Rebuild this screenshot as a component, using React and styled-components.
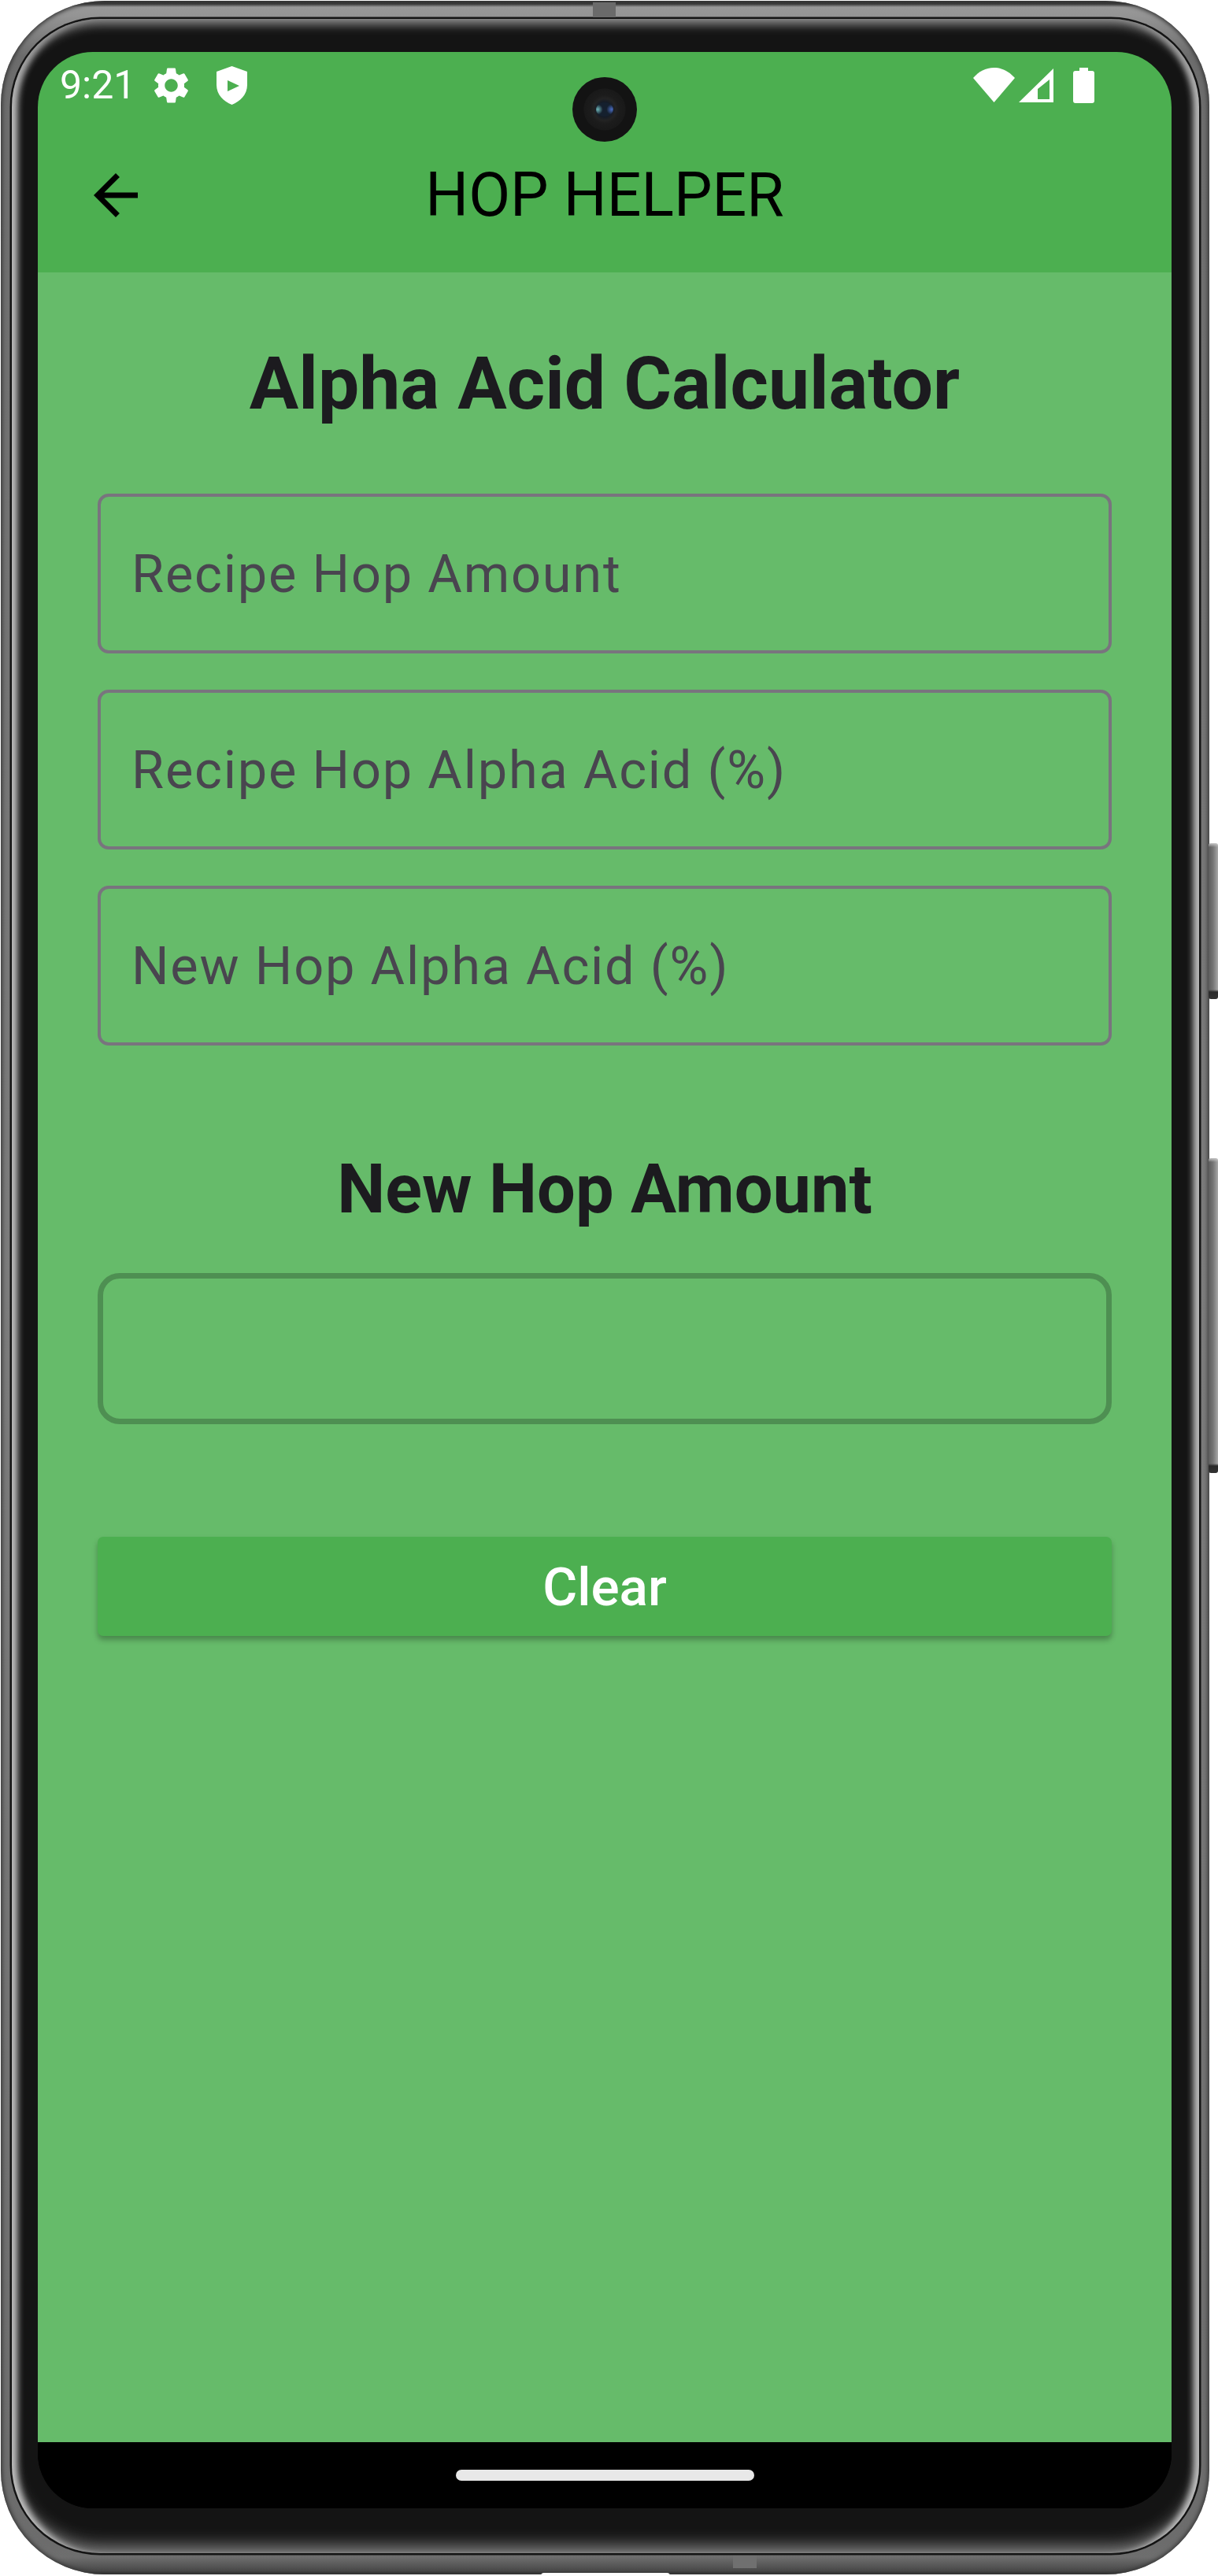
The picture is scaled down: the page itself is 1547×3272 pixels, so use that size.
import React from 'react';
import styled, { createGlobalStyle } from 'styled-components';

const GlobalStyle = createGlobalStyle`
  html, body {
    margin: 0;
    padding: 0;
    background: #ffffff;
    font-family: Roboto, "Liberation Sans", sans-serif;
  }
`;

const Stage = styled.div`
  width: 1547px;
  height: 3272px;
  padding: 1px 11px 2px 1px;
  box-sizing: border-box;
`;

const Shell = styled.div`
  position: relative;
  height: 100%;
  box-sizing: border-box;
  padding: 23px 13px 27px 14px;
  display: flex;
  border-radius: 132px;
  background: linear-gradient(to bottom, #2c2c2c 0, #3a3a3a 4px, #989898 8px, #949494 19px, #6c6c6c 70px, #7c7c7c 50%, #6c6c6c calc(100% - 40px), #6e6e6e calc(100% - 22px), #484848 calc(100% - 4px), #222 100%);
  box-shadow: inset 0 0 5px 2px #3a3a3a;
`;

const Bezel = styled.div`
  flex: 1;
  display: flex;
  box-sizing: border-box;
  padding: 42px 35px 57px 33px;
  border-radius: 112px;
  background: #141414;
  box-shadow:
    0 0 0 2.5px #141414,
    inset 0 14px 13px -7px #8c8c8c,
    inset 12px 0 9px -5px #c4c4c4,
    inset -12px 0 9px -5px #c4c4c4,
    inset 0 -16px 22px -8px #8c8c8c;
`;

const Screen = styled.div`
  position: relative;
  flex: 1;
  display: flex;
  flex-direction: column;
  overflow: hidden;
  border-radius: 70px;
  background: #000000;
`;

const SideKey = styled.div`
  position: absolute;
  right: -11px;
  top: ${(p) => p.$top}px;
  width: 12px;
  height: ${(p) => p.$height}px;
  border-radius: 3px;
  background:
    linear-gradient(to bottom, #c8c8c8 0, transparent 5px, transparent calc(100% - 12px), #2a2a2a calc(100% - 9px), #333 100%),
    linear-gradient(to right, #5c5c5c 0, #777 50%, #a8a8a8 100%);
`;

const TopSeam = styled.div`
  position: absolute;
  top: 2px;
  left: 752px;
  width: 29px;
  height: 19px;
  background: #6a6a6a;
`;

const BottomSeam = styled.div`
  position: absolute;
  bottom: 8px;
  left: 930px;
  width: 30px;
  height: 16px;
  background: #707070;
`;

const Speaker = styled.div`
  position: absolute;
  bottom: -2px;
  left: 686px;
  width: 164px;
  height: 4px;
  border-radius: 4px 4px 0 0;
  background: #ffffff;
`;

const Header = styled.header`
  background: #4caf50;
`;

const StatusBar = styled.div`
  height: 84px;
  display: flex;
  align-items: center;
  padding: 0 98px 0 28px;
  color: #ffffff;
`;

const Clock = styled.span`
  font-size: 50px;
  font-weight: 400;
  line-height: 1;
  margin-right: 18px;
`;

const StatusLeftIcon = styled.svg`
  display: block;
  fill: #ffffff;
  flex: none;
  margin-right: ${(p) => p.$gap || 0}px;
`;

const StatusRight = styled.div`
  margin-left: auto;
  display: flex;
  align-items: center;
`;

const StatusIcon = styled.svg`
  display: block;
  fill: #ffffff;
  fill-rule: evenodd;
  margin-left: ${(p) => p.$gap}px;
`;

const Camera = styled.div`
  position: absolute;
  top: 32px;
  left: 679px;
  width: 82px;
  height: 82px;
  border-radius: 50%;
  background: radial-gradient(circle at 50% 50%, #1c2230 0, #141b26 9px, #232323 14px, #1c1c1c 18px, #191919 26px, #131313 27px);
  display: flex;
  align-items: center;
  justify-content: center;
`;

const Lens = styled.div`
  width: 22px;
  height: 18px;
  border-radius: 50%;
  background:
    radial-gradient(circle at 90% 50%, #4a6cc0 0, transparent 30%),
    radial-gradient(circle at 10% 50%, #6fb6b8 0, transparent 30%),
    #15202e;
`;

const AppBar = styled.div`
  height: 196px;
  display: grid;
  grid-template-columns: 1fr auto 1fr;
  align-items: center;
`;

const BackIcon = styled.svg`
  display: block;
  width: 84px;
  height: 84px;
  margin-left: 57px;
  fill: #000000;
`;

const AppTitle = styled.div`
  font-size: 77px;
  font-weight: 400;
  color: #000000;
  line-height: 1;
  white-space: nowrap;
`;

const Content = styled.main`
  flex: 1;
  background: #66bb6a;
  padding: 88px 76px 0;
  display: flex;
  flex-direction: column;
`;

const Heading = styled.h1`
  margin: 0 0 85px;
  font-size: 93px;
  line-height: 108px;
  font-weight: 700;
  color: #1c1b1f;
  text-align: center;
`;

const SubHeading = styled.h2`
  margin: 133px 0 56px;
  font-size: 86.5px;
  line-height: 100px;
  font-weight: 700;
  color: #1c1b1f;
  text-align: center;
`;

const Fields = styled.div`
  display: flex;
  flex-direction: column;
  gap: 46px;
`;

const Field = styled.div`
  height: 203px;
  box-sizing: border-box;
  display: flex;
  align-items: center;
  padding-left: 39px;
  border: 4px solid #79747e;
  border-radius: 14px;
  font-size: 66.7px;
  letter-spacing: 1.8px;
  color: #49454f;
`;

const ResultBox = styled.div`
  height: 192px;
  box-sizing: border-box;
  border: 7px solid #4e8f52;
  border-radius: 28px;
`;

const ClearButton = styled.button`
  margin-top: 143px;
  height: 126px;
  border: 0;
  border-radius: 7px;
  background: #4caf50;
  color: #ffffff;
  font-family: inherit;
  font-size: 67.5px;
  font-weight: 500;
  box-shadow: 0 5px 7px rgba(0, 0, 0, 0.28);
`;

const NavBar = styled.div`
  height: 84px;
  flex: none;
  display: flex;
  align-items: center;
  justify-content: center;
  background: #000000;
`;

const HomePill = styled.div`
  width: 379px;
  height: 14px;
  border-radius: 7px;
  background: #e8e8e8;
`;

const gear = 'M19.14 12.94c.04-.3.06-.61.06-.94 0-.32-.02-.64-.07-.94l2.03-1.58c.18-.14.23-.41.12-.61l-1.92-3.32c-.12-.22-.37-.29-.59-.22l-2.39.96c-.5-.38-1.03-.7-1.62-.94l-.36-2.54c-.04-.24-.24-.41-.48-.41h-3.84c-.24 0-.43.17-.47.41l-.36 2.54c-.59.24-1.13.57-1.62.94l-2.39-.96c-.22-.08-.47 0-.59.22L2.74 8.87c-.12.21-.08.47.12.61l2.03 1.58c-.05.3-.09.63-.09.94s.02.64.07.94l-2.03 1.58c-.18.14-.23.41-.12.61l1.92 3.32c.12.22.37.29.59.22l2.39-.96c.5.38 1.03.7 1.62.94l.36 2.54c.05.24.24.41.48.41h3.84c.24 0 .44-.17.47-.41l.36-2.54c.59-.24 1.13-.56 1.62-.94l2.39.96c.22.08.47 0 .59-.22l1.92-3.32c.12-.22.07-.47-.12-.61l-2.01-1.58zM12 15.6c-1.98 0-3.6-1.62-3.6-3.6s1.62-3.6 3.6-3.6 3.6 1.62 3.6 3.6-1.62 3.6-3.6 3.6z';

export default function App() {
  return (
    <Stage>
      <GlobalStyle />
      <Shell>
        <TopSeam />
        <BottomSeam />
        <Speaker />
        <SideKey $top={1070} $height={198} />
        <SideKey $top={1470} $height={400} />
        <Bezel>
          <Screen>
            <Header>
              <StatusBar>
                <Clock>9:21</Clock>
                <StatusLeftIcon width="55" height="55" viewBox="0 0 24 24" $gap={30}>
                  <path d={gear} />
                </StatusLeftIcon>
                <StatusLeftIcon width="39" height="49" viewBox="0 0 39 49" fillRule="evenodd">
                  <path d="M19.5 0L39 7V24C39 36 30 45 19.5 49C9 45 0 36 0 24V7ZM14 18V32L29 25Z" />
                </StatusLeftIcon>
                <StatusRight>
                  <StatusIcon width="53" height="44" viewBox="0 0 53 44" $gap={0}>
                    <path d="M26.5 44L0 13C7 5 16 0 26.5 0C37 0 46 5 53 13Z" />
                  </StatusIcon>
                  <StatusIcon width="44" height="43" viewBox="0 0 44 43" $gap={5}>
                    <path d="M44 0V43H0ZM39 14L24 26V39H39Z" />
                  </StatusIcon>
                  <StatusIcon width="27" height="45" viewBox="0 0 27 45" $gap={25}>
                    <path d="M8 0H19V4H24A3 3 0 0 1 27 7V42A3 3 0 0 1 24 45H3A3 3 0 0 1 0 42V7A3 3 0 0 1 3 4H8Z" />
                  </StatusIcon>
                </StatusRight>
              </StatusBar>
              <AppBar>
                <BackIcon viewBox="0 0 24 24">
                  <path d="M20 11H7.83l5.59-5.59L12 4l-8 8 8 8 1.41-1.41L7.83 13H20v-2z" />
                </BackIcon>
                <AppTitle>HOP HELPER</AppTitle>
              </AppBar>
            </Header>
            <Camera>
              <Lens />
            </Camera>
            <Content>
              <Heading>Alpha Acid Calculator</Heading>
              <Fields>
                <Field>Recipe Hop Amount</Field>
                <Field>Recipe Hop Alpha Acid (%)</Field>
                <Field>New Hop Alpha Acid (%)</Field>
              </Fields>
              <SubHeading>New Hop Amount</SubHeading>
              <ResultBox />
              <ClearButton>Clear</ClearButton>
            </Content>
            <NavBar>
              <HomePill />
            </NavBar>
          </Screen>
        </Bezel>
      </Shell>
    </Stage>
  );
}
